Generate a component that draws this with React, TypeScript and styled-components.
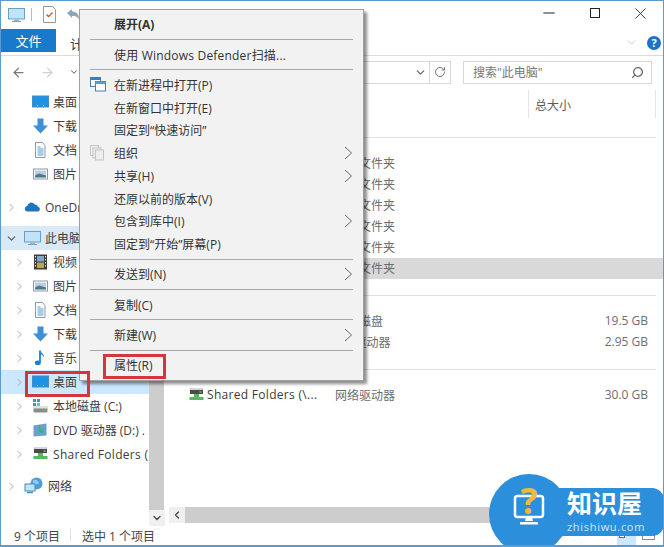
import React from 'react';
import styled, { createGlobalStyle } from 'styled-components';
import { ArrowLeft, ArrowRight, ChevronDown, ChevronLeft, ChevronRight, Minus, RotateCw, Search, X } from 'lucide-react';

const FONT = '"Open Sans", "Noto Sans CJK SC", sans-serif';

// --- Icons ---
type IconKind = 'desktop' | 'download' | 'doc' | 'picture' | 'cloud' | 'pc' | 'video' | 'music' | 'disk' | 'dvd' | 'share' | 'net';

const NavIcon: React.FC<{ kind: IconKind }> = ({ kind }) => {
  switch (kind) {
    case 'desktop':
      return (
        <svg width="17" height="16" viewBox="0 0 17 16">
          <rect x="0.5" y="2" width="16" height="11" fill="#1b93e6" stroke="#4a8cc0" />
          <path d="M5 11.5h1M11 11.5h1" stroke="#cfeaff" />
        </svg>
      );
    case 'download':
      return (
        <svg width="17" height="16" viewBox="0 0 17 16">
          <path d="M5.5 0.5h6v7h4.5l-7.5 8-7.500-8h4.500z" fill="#3d8fd6" />
        </svg>
      );
    case 'doc':
      return (
        <svg width="17" height="16" viewBox="0 0 17 16">
          <path d="M3.500 0.500h7l2.500 3v12H3.500z" fill="#fff" stroke="#8d9aa5" />
          <path d="M5.500 5h3M5.500 7h6M5.500 9h6M5.500 11h6M5.500 13h6" stroke="#4f9ad0" />
        </svg>
      );
    case 'picture':
      return (
        <svg width="17" height="16" viewBox="0 0 17 16">
          <rect x="1.500" y="3" width="14" height="10" fill="#fff" stroke="#8f979e" />
          <rect x="3" y="4.500" width="11" height="7" fill="#b9d0e0" />
          <path d="M3 9.500l4-2 7 2v2H3z" fill="#4d7a8c" />
        </svg>
      );
    case 'cloud':
      return (
        <svg width="17" height="16" viewBox="0 0 17 16">
          <path d="M3 12.500a2.800 2.800 0 0 1 .2-5.500 4 4 0 0 1 7.400-1.500 3.400 3.400 0 0 1 3.400 2.300 2.400 2.400 0 0 1 0 4.700z" fill="#1d75bd" />
        </svg>
      );
    case 'pc':
      return (
        <svg width="17" height="16" viewBox="0 0 17 16">
          <rect x="0.500" y="1.500" width="16" height="10.500" fill="#bfe4f7" stroke="#6c9fc0" />
          <path d="M6.500 12.500h4l.5 1.500H6z" fill="#9cb4c4" />
          <path d="M4 14.500h9" stroke="#7f9fb5" />
        </svg>
      );
    case 'video':
      return (
        <svg width="17" height="16" viewBox="0 0 17 16">
          <rect x="2" y="0.500" width="13" height="15" fill="#3c3c3c" />
          <rect x="5" y="2" width="7" height="5.500" fill="#7fa8c9" />
          <rect x="5" y="8.500" width="7" height="5.500" fill="#b9a65a" />
          <path d="M3.500 2v12M13.500 2v12" stroke="#ddd" strokeDasharray="1.500 1.500" />
        </svg>
      );
    case 'music':
      return (
        <svg width="17" height="16" viewBox="0 0 17 16">
          <path d="M8 0.500v11.500" stroke="#1a7fd0" strokeWidth="1.800" />
          <ellipse cx="5.800" cy="12.800" rx="3" ry="2.400" fill="#1a7fd0" />
          <path d="M8.500 0.500c.5 3 4 3.500 3.500 7-.8-2-2-3-3.500-3.500z" fill="#1a7fd0" />
        </svg>
      );
    case 'disk':
      return (
        <svg width="17" height="16" viewBox="0 0 17 16">
          <path d="M1 1h3v3H1zM5 1h3v3H5zM1 5h3v3H1z" fill="#27a0c8" />
          <path d="M5 5h3v3H5z" fill="#5fc0dc" />
          <rect x="1.500" y="9" width="14" height="5.500" rx="1" fill="#8a8a8a" />
          <rect x="1.500" y="8" width="14" height="2.500" fill="#e0e0e0" />
          <rect x="12" y="11.500" width="2" height="1" fill="#4fd04f" />
        </svg>
      );
    case 'dvd':
      return (
        <svg width="17" height="16" viewBox="0 0 17 16">
          <path d="M1.500 3.500l13-2v12l-13 1z" fill="#6ba0cf" />
          <path d="M8 2.500c1 3-1 4 2 5.500l2-2-1 5-5-1 2-1.500C6 7.500 6 5 8 2.500z" fill="#35b56e" />
        </svg>
      );
    case 'share':
      return (
        <svg width="17" height="16" viewBox="0 0 17 16">
          <path d="M2 7V3a2 2 0 0 1 2-2h9a2 2 0 0 1 2 2v4z" fill="#4a4a4a" />
          <rect x="2" y="1" width="13" height="2" rx="1" fill="#d8d8d8" />
          <rect x="6" y="7" width="5" height="4" fill="#59b85c" />
          <rect x="1.500" y="10" width="14" height="3" fill="#59b85c" />
          <rect x="11.500" y="4.500" width="2" height="1" fill="#a8e0a8" />
        </svg>
      );
    case 'net':
      return (
        <svg width="20" height="18" viewBox="0 0 20 18">
          <circle cx="12.500" cy="6.500" r="6" fill="#4b9fde" />
          <path d="M9 3c3-1 5 0 6 3-2 2-4 2-6 0z" fill="#8fc9ee" />
          <rect x="1" y="7" width="10" height="7" fill="#bfe4f7" stroke="#4a88b8" />
          <path d="M3 15.500h6" stroke="#4a88b8" strokeWidth="1.500" />
        </svg>
      );
  }
};

const MenuChevron = () => (
  <svg width="9" height="14" viewBox="0 0 9 14">
    <path d="M1 1l6.500 6L1 13" fill="none" stroke="#666" />
  </svg>
);

const ProcessIcon = () => (
  <svg width="16" height="15" viewBox="0 0 16 15">
    <rect x="0.500" y="0.500" width="10" height="9" fill="#fff" stroke="#4d7fa8" />
    <rect x="0.500" y="0.500" width="10" height="2.500" fill="#3d7fb5" />
    <rect x="5.500" y="4.500" width="10" height="9.500" fill="#fff" stroke="#4d7fa8" />
    <rect x="5.500" y="4.500" width="10" height="2.500" fill="#58a0d0" />
  </svg>
);

const PagesIcon = () => (
  <svg width="15" height="16" viewBox="0 0 15 16">
    <rect x="0.500" y="0.500" width="8" height="10" fill="#eee" stroke="#c4c4c4" />
    <rect x="3" y="3" width="8" height="10" fill="#eee" stroke="#c4c4c4" />
    <rect x="5.500" y="5" width="8" height="10" fill="#eee" stroke="#c4c4c4" />
  </svg>
);

const LogoMark = () => (
  <svg width="40" height="58" viewBox="0 0 40 58">
    <rect x="6" y="22" width="28" height="21" rx="2.500" fill="none" stroke="#fff" strokeWidth="2.500" />
    <path d="M17 43h6l1 4h-8z" fill="#fff" />
    <path d="M11 48h18v2.500H11z" fill="#fff" />
    <text x="20" y="40" textAnchor="middle" fontSize="36" fontWeight="700" fontFamily="Open Sans" fill="#f1b93c">?</text>
  </svg>
);

// --- Data ---
const quickAccess: { kind: IconKind; label: string }[] = [
  { kind: 'desktop', label: '桌面' },
  { kind: 'download', label: '下载' },
  { kind: 'doc', label: '文档' },
  { kind: 'picture', label: '图片' },
];

const pcItems: { kind: IconKind; label: string; selected?: boolean; wide?: boolean }[] = [
  { kind: 'video', label: '视频' },
  { kind: 'picture', label: '图片' },
  { kind: 'doc', label: '文档' },
  { kind: 'download', label: '下载' },
  { kind: 'music', label: '音乐' },
  { kind: 'desktop', label: '桌面', selected: true },
  { kind: 'disk', label: '本地磁盘 (C:)' },
  { kind: 'dvd', label: 'DVD 驱动器 (D:) .' },
  { kind: 'share', label: 'Shared Folders (', wide: true },
];

const folderRows = [0, 1, 2, 3, 4, 5];

type MenuEntry =
  | { sep: true }
  | { label: string; bold?: boolean; arrow?: boolean; wide?: boolean; icon?: 'process' | 'pages' };

const menuEntries: MenuEntry[] = [
  { label: '展开(A)', bold: true },
  { sep: true },
  { label: '使用 Windows Defender扫描...', wide: true },
  { sep: true },
  { label: '在新进程中打开(P)', icon: 'process' },
  { label: '在新窗口中打开(E)' },
  { label: '固定到“快速访问”' },
  { label: '组织', arrow: true, icon: 'pages' },
  { label: '共享(H)', arrow: true },
  { label: '还原以前的版本(V)' },
  { label: '包含到库中(I)', arrow: true },
  { label: '固定到“开始”屏幕(P)' },
  { sep: true },
  { label: '发送到(N)', arrow: true },
  { sep: true },
  { label: '复制(C)' },
  { sep: true },
  { label: '新建(W)', arrow: true },
  { sep: true },
  { label: '属性(R)' },
];

// --- Page ---
const App = () => (
  <>
    <GlobalStyle />
    <Window>
      <TitleBar>
        <QuickTools>
          <NavIcon kind="pc" />
          <ToolDivider />
          <svg width="13" height="17" viewBox="0 0 13 17">
            <path d="M.5.500h9l3 3v13H.500z" fill="#fff" stroke="#999" />
            <path d="M3.500 8.500l2 2 4-4" fill="none" stroke="#d8502c" strokeWidth="1.300" />
          </svg>
          <svg width="14" height="14" viewBox="0 0 14 14">
            <path d="M1 5l5-4v2.500c4 0 7 2 7 8-1.500-3-3.500-3.500-7-3.500v2z" fill="#8fa5b8" />
          </svg>
        </QuickTools>
        <WindowButtons>
          <WindowButton><Minus size={18} strokeWidth={1.5} color="#222" /></WindowButton>
          <WindowButton><MaximizeBox /></WindowButton>
          <WindowButton><X size={19} strokeWidth={1.1} color="#222" /></WindowButton>
        </WindowButtons>
      </TitleBar>

      <TabStrip>
        <FileTab>文件</FileTab>
        <Tab>计算机</Tab>
        <TabSpacer />
        <ChevronDown size={13} color="#bbb" strokeWidth={1.4} />
        <HelpBadge>?</HelpBadge>
      </TabStrip>

      <NavBar>
        <NavArrows>
          <ArrowLeft size={15} color="#777" strokeWidth={2} />
          <ArrowRight size={15} color="#d0d0d0" strokeWidth={2} />
          <ChevronDown size={10} color="#777" strokeWidth={2.5} />
        </NavArrows>
        <AddressBar>
          <ChevronDown size={13} color="#666" strokeWidth={2.4} />
          <AddressRefresh>
            <RotateCw size={12} color="#777" strokeWidth={2} />
          </AddressRefresh>
        </AddressBar>
        <SearchBox>
          <span>搜索"此电脑"</span>
          <Search size={13} color="#666" strokeWidth={2.4} style={{ transform: 'scaleX(-1)' }} />
        </SearchBox>
      </NavBar>

      <Body>
        <Sidebar>
          <NavGroup>
            {quickAccess.map((item) => (
              <NavRow key={item.label} $level={1}>
                <NavChevronSlot />
                <NavIcon kind={item.kind} />
                <NavLabel>{item.label}</NavLabel>
              </NavRow>
            ))}
          </NavGroup>
          <NavGroup $gap={9}>
            <NavRow $level={0}>
              <NavChevronSlot><ChevronRight size={13} color="#aaa" strokeWidth={1.8} /></NavChevronSlot>
              <NavIcon kind="cloud" />
              <NavLabel>OneDrive</NavLabel>
            </NavRow>
          </NavGroup>
          <NavGroup $gap={7}>
            <NavRow $level={0} $tint="#d9e9f7">
              <NavChevronSlot><ChevronDown size={13} color="#555" strokeWidth={2} /></NavChevronSlot>
              <NavIcon kind="pc" />
              <NavLabel>此电脑</NavLabel>
            </NavRow>
            {pcItems.map((item) => (
              <NavRow key={item.label} $level={1} $tint={item.selected ? '#cce8ff' : undefined}>
                <NavChevronSlot><ChevronRight size={13} color="#aaa" strokeWidth={1.8} /></NavChevronSlot>
                <NavIcon kind={item.kind} />
                <NavLabel $wide={item.wide}>{item.label}</NavLabel>
              </NavRow>
            ))}
          </NavGroup>
          <NavGroup $gap={8}>
            <NavRow $level={0}>
              <NavChevronSlot><ChevronRight size={13} color="#aaa" strokeWidth={1.8} /></NavChevronSlot>
              <NavIcon kind="net" />
              <NavLabel>网络</NavLabel>
            </NavRow>
          </NavGroup>
        </Sidebar>

        <VScroll>
          <VThumb />
          <ScrollButton><ChevronDown size={12} color="#444" strokeWidth={2.6} /></ScrollButton>
        </VScroll>

        <Content>
          <ColumnHeader>
            <HeaderCell>总大小</HeaderCell>
          </ColumnHeader>

          <SectionHead $gap={8.5}><SectionLine /></SectionHead>
          <SectionRows>
            {folderRows.map((n) => (
              <ItemRow key={n} $selected={n === folderRows.length - 1}>
                <ItemName />
                <ItemType>系统文件夹</ItemType>
              </ItemRow>
            ))}
          </SectionRows>

          <SectionHead $gap={5.5}><SectionLine /></SectionHead>
          <SectionRows>
            <ItemRow>
              <ItemName />
              <ItemType>本地磁盘</ItemType>
              <ItemSize>19.5 GB</ItemSize>
            </ItemRow>
            <ItemRow>
              <ItemName />
              <ItemType>CD 驱动器</ItemType>
              <ItemSize>2.95 GB</ItemSize>
            </ItemRow>
          </SectionRows>

          <SectionHead $gap={6}><SectionLine /></SectionHead>
          <SectionRows>
            <ItemRow>
              <ItemName>
                <NavIcon kind="share" />
                <span>Shared Folders (\...</span>
              </ItemName>
              <ItemType>网络驱动器</ItemType>
              <ItemSize>30.0 GB</ItemSize>
            </ItemRow>
          </SectionRows>

          <ContentFill />
          <HScroll>
            <ScrollButton><ChevronLeft size={12} color="#444" strokeWidth={2.6} /></ScrollButton>
            <HThumb />
          </HScroll>
        </Content>
      </Body>

      <StatusBar>
        <StatusText>9 个项目</StatusText>
        <StatusDivider />
        <StatusText>选中 1 个项目</StatusText>
        <TabSpacer />
        <ViewButton $active>
          <svg width="15" height="7" viewBox="0 0 15 7">
            <rect x="0.500" y="0.500" width="5" height="5" fill="#fff" stroke="#667" />
            <path d="M7.500 3h3M12 3h3" stroke="#667" />
          </svg>
        </ViewButton>
        <ViewButton>
          <svg width="13" height="9" viewBox="0 0 13 9">
            <rect x="0.500" y="0.500" width="12" height="8" fill="#fff" stroke="#889" />
          </svg>
        </ViewButton>
      </StatusBar>

      <ContextMenu>
        {menuEntries.map((entry, i) =>
          'sep' in entry ? (
            <MenuSeparator key={i} />
          ) : (
            <MenuItem key={i} $bold={entry.bold}>
              <MenuIconSlot>
                {entry.icon === 'process' && <ProcessIcon />}
                {entry.icon === 'pages' && <PagesIcon />}
              </MenuIconSlot>
              <MenuLabel $wide={entry.wide}>{entry.label}</MenuLabel>
              {entry.arrow && <MenuChevron />}
            </MenuItem>
          )
        )}
      </ContextMenu>

      <Annotation $x={24} $y={370} $w={65} $h={26} />
      <Annotation $x={102} $y={353} $w={63} $h={25} />

      <Watermark>
        <LogoCircle><LogoMark /></LogoCircle>
        <LogoBar>
          <LogoTitle>知识屋</LogoTitle>
          <LogoUrl>zhishiwu.com</LogoUrl>
        </LogoBar>
      </Watermark>
    </Window>
  </>
);

export default App;

// --- STYLES ---
const GlobalStyle = createGlobalStyle`
  html, body {
    margin: 0;
    padding: 0;
    background: #fff;
  }
`;

const Window = styled.div`
  position: relative;
  box-sizing: border-box;
  width: 664px;
  height: 547px;
  overflow: hidden;
  display: flex;
  flex-direction: column;
  background: #fff;
  border: 1px solid #5b9bd0;
  border-bottom-width: 2px;
  font-family: ${FONT};
  font-size: 12px;
  color: #3c3c3c;
`;

const TitleBar = styled.div`
  height: 27px;
  display: flex;
  align-items: center;
  justify-content: space-between;
  padding-left: 7px;
`;

const QuickTools = styled.div`
  display: flex;
  align-items: center;
  > svg + svg {
    margin-left: 10px;
  }
`;

const ToolDivider = styled.div`
  width: 1px;
  height: 13px;
  margin: 0 11px 0 6px;
  background: #bbb;
`;

const WindowButtons = styled.div`
  display: flex;
  margin-top: -3px;
`;

const WindowButton = styled.div`
  width: 45.5px;
  height: 22px;
  display: flex;
  align-items: center;
  justify-content: center;
`;

const MaximizeBox = styled.div`
  box-sizing: border-box;
  width: 10px;
  height: 10px;
  border: 1px solid #222;
`;

const TabStrip = styled.div`
  height: 27px;
  display: flex;
  align-items: flex-start;
  padding-right: 2px;
  border-bottom: 1px solid #dadbdc;
  > svg {
    margin-top: 8px;
    margin-right: 9px;
  }
`;

const FileTab = styled.div`
  width: 55px;
  height: 23px;
  margin-top: 1px;
  display: flex;
  align-items: center;
  justify-content: center;
  background: #1979ca;
  color: #fff;
  font-size: 13px;
`;

const Tab = styled.div`
  margin-top: 6px;
  margin-left: 14px;
  font-size: 13px;
`;

const TabSpacer = styled.div`
  flex: 1;
`;

const HelpBadge = styled.div`
  width: 14px;
  height: 14px;
  margin-top: 7.500px;
  border-radius: 50%;
  display: flex;
  align-items: center;
  justify-content: center;
  background: #1a73c5;
  color: #fff;
  font-size: 11px;
  font-weight: 700;
`;

const NavBar = styled.div`
  height: 32px;
  display: flex;
  align-items: center;
  padding: 0 11px 0 10px;
`;

const NavArrows = styled.div`
  width: 71px;
  display: flex;
  align-items: center;
  gap: 14px;
`;

const AddressBar = styled.div`
  box-sizing: border-box;
  flex: 1;
  height: 23px;
  display: flex;
  align-items: center;
  justify-content: flex-end;
  gap: 2px;
  border: 1px solid #d9d9d9;
`;

const AddressRefresh = styled.div`
  width: 20px;
  height: 100%;
  display: flex;
  align-items: center;
  justify-content: center;
  border-left: 1px solid #d9d9d9;
`;

const SearchBox = styled.div`
  box-sizing: border-box;
  width: 189px;
  height: 23px;
  margin-left: 12px;
  padding: 0 7px 0 9px;
  display: flex;
  align-items: center;
  justify-content: space-between;
  border: 1px solid #d9d9d9;
  color: #777;
`;

const Body = styled.div`
  flex: 1;
  min-height: 0;
  display: flex;
`;

const Sidebar = styled.div`
  width: 148px;
  padding-top: 2px;
  overflow: hidden;
`;

const NavGroup = styled.div<{ $gap?: number }>`
  margin-top: ${(p) => p.$gap ?? 0}px;
`;

const NavRow = styled.div<{ $level: number; $tint?: string }>`
  height: 24px;
  display: flex;
  align-items: center;
  padding-left: ${(p) => (p.$level === 0 ? 4 : 12)}px;
  background: ${(p) => p.$tint ?? 'transparent'};
  white-space: nowrap;
`;

const NavChevronSlot = styled.div`
  width: 19px;
  flex: none;
  display: flex;
  align-items: center;
`;

const NavLabel = styled.span<{ $wide?: boolean }>`
  margin-left: 4px;
  letter-spacing: ${(p) => (p.$wide ? '0.3px' : 'normal')};
`;

const VScroll = styled.div`
  width: 15px;
  display: flex;
  flex-direction: column;
`;

const VThumb = styled.div`
  flex: 1;
  background: #cdcdcd;
`;

const ScrollButton = styled.div`
  width: 16px;
  height: 16px;
  flex: none;
  display: flex;
  align-items: center;
  justify-content: center;
  background: #f0f0f0;
`;

const Content = styled.div`
  flex: 1;
  min-width: 0;
  display: flex;
  flex-direction: column;
`;

const ColumnHeader = styled.div`
  height: 28px;
  margin-top: 2px;
  padding-right: 7px;
  display: flex;
  justify-content: flex-end;
`;

const HeaderCell = styled.div`
  box-sizing: border-box;
  width: 128px;
  padding: 1px 0 0 6px;
  display: flex;
  align-items: center;
  border-left: 1px solid #e5e5e5;
  border-right: 1px solid #e5e5e5;
  color: #5a5a5a;
`;

const SectionHead = styled.div<{ $gap: number }>`
  height: 22px;
  margin-top: ${(p) => p.$gap}px;
  padding: 0 7px 0 8px;
  display: flex;
  align-items: center;
`;

const SectionLine = styled.div`
  flex: 1;
  height: 1px;
  background: #e2e2e2;
`;

const SectionRows = styled.div`
  padding-top: 4px;
`;

const ItemRow = styled.div<{ $selected?: boolean }>`
  height: 21px;
  padding: 0 15px 0 24px;
  display: grid;
  grid-template-columns: 147px 1fr auto;
  align-items: center;
  background: ${(p) => (p.$selected ? '#d9d9d9' : 'transparent')};
`;

const ItemName = styled.div`
  display: flex;
  align-items: center;
  gap: 2px;
  letter-spacing: 0.3px;
  white-space: nowrap;
`;

const ItemType = styled.div`
  color: #6d6d6d;
`;

const ItemSize = styled.div`
  color: #6d6d6d;
`;

const ContentFill = styled.div`
  flex: 1;
`;

const HScroll = styled.div`
  height: 16px;
  margin: 0 0 3px 5px;
  display: flex;
`;

const HThumb = styled.div`
  flex: 1;
  margin-right: 24px;
  background: #cdcdcd;
`;

const StatusBar = styled.div`
  height: 19px;
  padding: 0 8px 0 13px;
  display: flex;
  align-items: center;
  color: #444;
`;

const StatusText = styled.span`
  white-space: nowrap;
`;

const StatusDivider = styled.div`
  width: 1px;
  height: 13px;
  margin: 0 11px 0 10px;
  background: #e2e2e2;
`;

const ViewButton = styled.div<{ $active?: boolean }>`
  width: ${(p) => (p.$active ? 19 : 13)}px;
  height: 19px;
  margin-left: 6px;
  display: flex;
  align-items: center;
  justify-content: center;
  background: ${(p) => (p.$active ? '#cce8ff' : 'transparent')};
`;

const ContextMenu = styled.div`
  position: absolute;
  left: 78px;
  top: 8px;
  box-sizing: border-box;
  width: 285px;
  height: 372px;
  padding-top: 3px;
  background: #f2f2f2;
  border: 1px solid #a0a0a0;
  box-shadow: 3px 3px 3px rgba(0, 0, 0, 0.45);
  z-index: 2;
`;

const MenuItem = styled.div<{ $bold?: boolean }>`
  height: 22.75px;
  padding: 0 10px;
  display: flex;
  align-items: center;
  font-weight: ${(p) => (p.$bold ? 700 : 400)};
  color: #333;
`;

const MenuIconSlot = styled.div`
  width: 16px;
  margin-right: 8px;
  flex: none;
  display: flex;
  align-items: center;
`;

const MenuLabel = styled.span<{ $wide?: boolean }>`
  flex: 1;
  white-space: nowrap;
  letter-spacing: ${(p) => (p.$wide ? '0.2px' : 'normal')};
`;

const MenuSeparator = styled.div`
  height: 1px;
  margin: 3.25px 10px;
  background: #a8a8a8;
`;

const Annotation = styled.div<{ $x: number; $y: number; $w: number; $h: number }>`
  position: absolute;
  left: ${(p) => p.$x}px;
  top: ${(p) => p.$y}px;
  width: ${(p) => p.$w}px;
  height: ${(p) => p.$h}px;
  box-sizing: border-box;
  border: 3px solid #d5363e;
  z-index: 3;
`;

const Watermark = styled.div`
  position: absolute;
  right: -1px;
  bottom: 0;
  width: 175px;
  height: 71px;
  z-index: 4;
`;

const LogoCircle = styled.div`
  position: absolute;
  left: 0;
  top: 0;
  width: 80px;
  height: 80px;
  border-radius: 50%;
  display: flex;
  justify-content: center;
  background: #2b8fdc;
`;

const LogoBar = styled.div`
  position: absolute;
  left: 60px;
  right: 0;
  top: 14px;
  height: 48px;
  padding-left: 18px;
  box-sizing: border-box;
  border-radius: 0 12px 12px 0;
  background: #2b8fdc;
  color: #fff;
`;

const LogoTitle = styled.div`
  height: 31px;
  font-size: 25px;
  font-weight: 700;
  line-height: 31px;
  white-space: nowrap;
`;

const LogoUrl = styled.div`
  margin-top: 1px;
  font-size: 11px;
  line-height: 14px;
  letter-spacing: 0.7px;
  color: #cfe6f8;
  white-space: nowrap;
`;
